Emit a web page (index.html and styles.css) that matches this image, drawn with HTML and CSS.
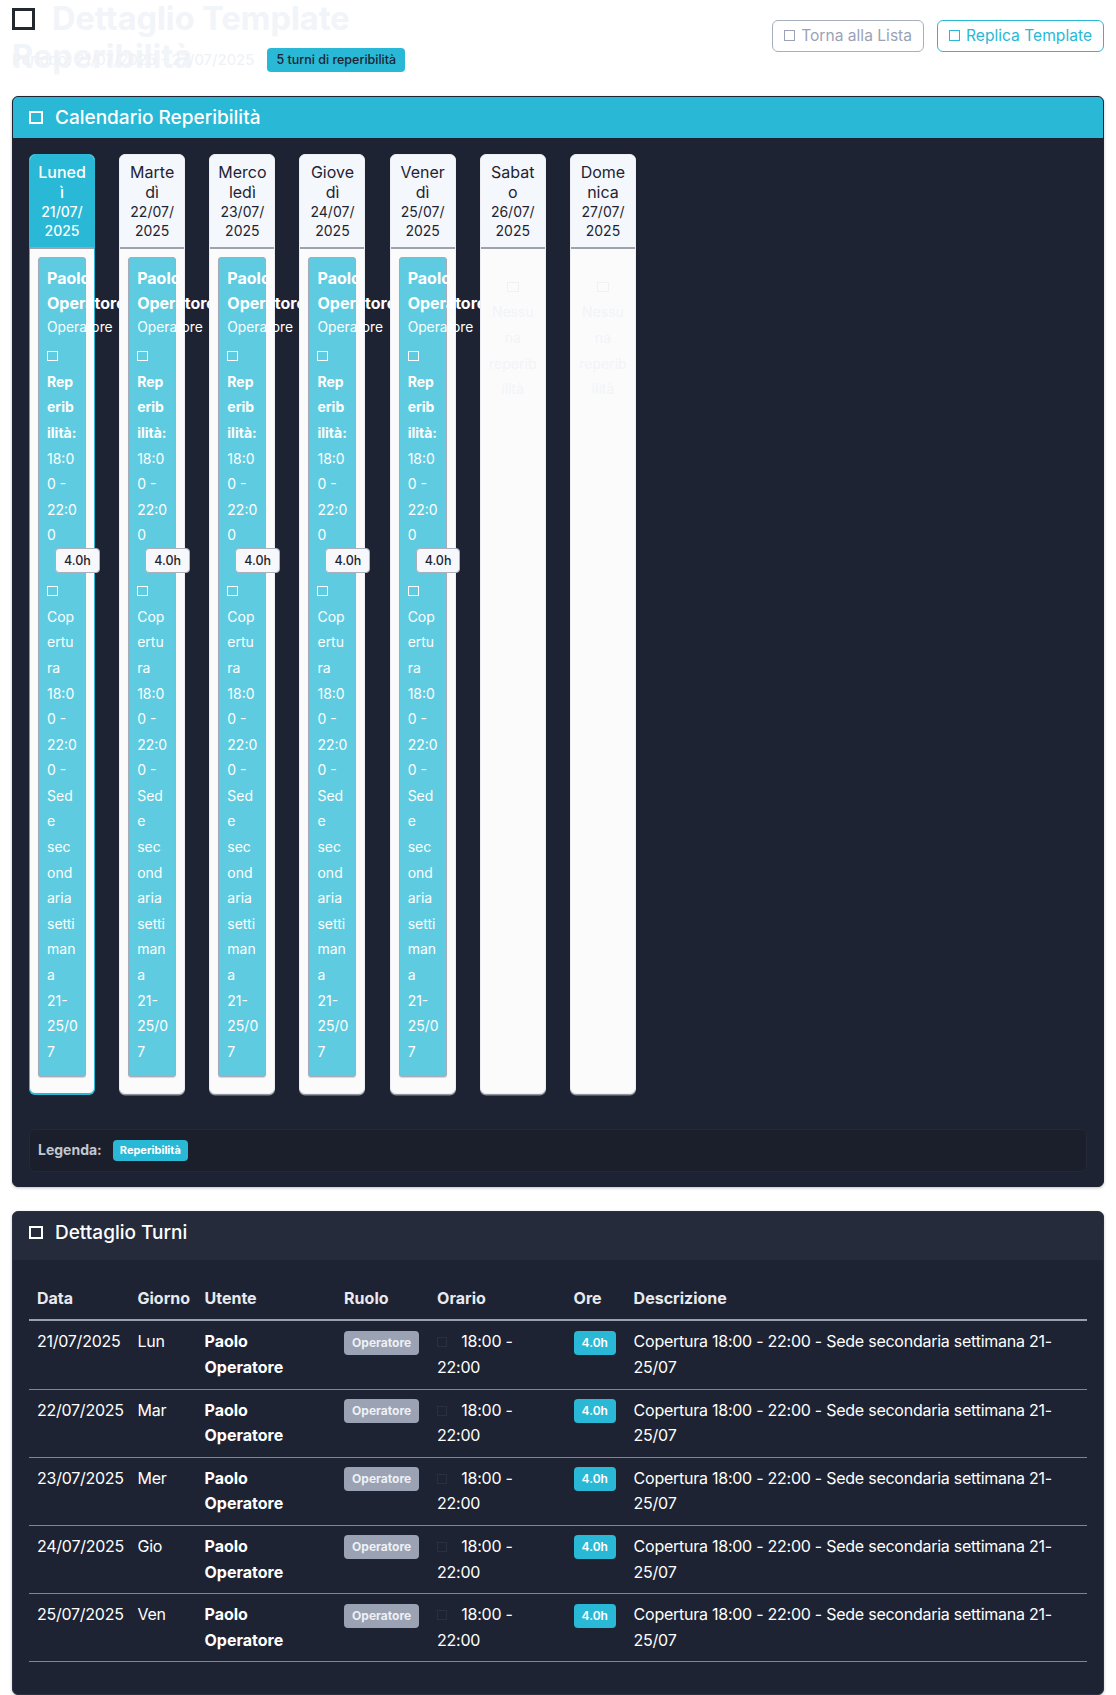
FILE: index.html
```html
<!DOCTYPE html>
<html lang="it">
<head>
<meta charset="utf-8">
<title>Dettaglio Template Reperibilità</title>
<link rel="stylesheet" href="styles.css">
</head>
<body>
<div class="page">
  <header class="top">
    <div class="title-block">
      <h1 class="title"><span class="ico ico-title"></span>Dettaglio Template Reperibilità</h1>
      <div class="subtitle-row">
        <span class="period">Periodo: 21/07/2025 - 27/07/2025</span>
        <span class="badge badge-count">5 turni di reperibilità</span>
      </div>
    </div>
    <div class="actions">
      <button class="btn btn-gray"><span class="ico ico-btn"></span>Torna alla Lista</button>
      <button class="btn btn-teal"><span class="ico ico-btn"></span>Replica Template</button>
    </div>
  </header>

  <section class="card card-cal">
    <div class="card-head head-teal"><span class="ico ico-head"></span>Calendario Reperibilità</div>
    <div class="card-body cal-body">
      <div class="week">
        <div class="day today">
          <div class="day-head"><div class="day-name">Luned<wbr>ì</div><div class="day-date">21/07/<wbr>2025</div></div>
          <div class="day-body">
            <div class="shift">
              <div class="shift-name">Paolo Operatore</div>
              <div class="shift-role">Operatore</div>
              <div class="shift-time"><span class="ico ico-sm"></span> <strong>Rep<wbr>erib<wbr>ilità:</strong> 18:0<wbr>0 - 22:0<wbr>0 <span class="badge badge-hours">4.0h</span></div>
              <div class="shift-desc"><span class="ico ico-sm"></span> Cop<wbr>ertu<wbr>ra 18:0<wbr>0 - 22:0<wbr>0 - Sed<wbr>e sec<wbr>ond<wbr>aria setti<wbr>man<wbr>a 21-<wbr>25/0<wbr>7</div>
            </div>
          </div>
        </div>
        <div class="day">
          <div class="day-head"><div class="day-name">Marte<wbr>dì</div><div class="day-date">22/07/<wbr>2025</div></div>
          <div class="day-body">
            <div class="shift">
              <div class="shift-name">Paolo Operatore</div>
              <div class="shift-role">Operatore</div>
              <div class="shift-time"><span class="ico ico-sm"></span> <strong>Rep<wbr>erib<wbr>ilità:</strong> 18:0<wbr>0 - 22:0<wbr>0 <span class="badge badge-hours">4.0h</span></div>
              <div class="shift-desc"><span class="ico ico-sm"></span> Cop<wbr>ertu<wbr>ra 18:0<wbr>0 - 22:0<wbr>0 - Sed<wbr>e sec<wbr>ond<wbr>aria setti<wbr>man<wbr>a 21-<wbr>25/0<wbr>7</div>
            </div>
          </div>
        </div>
        <div class="day">
          <div class="day-head"><div class="day-name">Merco<wbr>ledì</div><div class="day-date">23/07/<wbr>2025</div></div>
          <div class="day-body">
            <div class="shift">
              <div class="shift-name">Paolo Operatore</div>
              <div class="shift-role">Operatore</div>
              <div class="shift-time"><span class="ico ico-sm"></span> <strong>Rep<wbr>erib<wbr>ilità:</strong> 18:0<wbr>0 - 22:0<wbr>0 <span class="badge badge-hours">4.0h</span></div>
              <div class="shift-desc"><span class="ico ico-sm"></span> Cop<wbr>ertu<wbr>ra 18:0<wbr>0 - 22:0<wbr>0 - Sed<wbr>e sec<wbr>ond<wbr>aria setti<wbr>man<wbr>a 21-<wbr>25/0<wbr>7</div>
            </div>
          </div>
        </div>
        <div class="day">
          <div class="day-head"><div class="day-name">Giove<wbr>dì</div><div class="day-date">24/07/<wbr>2025</div></div>
          <div class="day-body">
            <div class="shift">
              <div class="shift-name">Paolo Operatore</div>
              <div class="shift-role">Operatore</div>
              <div class="shift-time"><span class="ico ico-sm"></span> <strong>Rep<wbr>erib<wbr>ilità:</strong> 18:0<wbr>0 - 22:0<wbr>0 <span class="badge badge-hours">4.0h</span></div>
              <div class="shift-desc"><span class="ico ico-sm"></span> Cop<wbr>ertu<wbr>ra 18:0<wbr>0 - 22:0<wbr>0 - Sed<wbr>e sec<wbr>ond<wbr>aria setti<wbr>man<wbr>a 21-<wbr>25/0<wbr>7</div>
            </div>
          </div>
        </div>
        <div class="day">
          <div class="day-head"><div class="day-name">Vener<wbr>dì</div><div class="day-date">25/07/<wbr>2025</div></div>
          <div class="day-body">
            <div class="shift">
              <div class="shift-name">Paolo Operatore</div>
              <div class="shift-role">Operatore</div>
              <div class="shift-time"><span class="ico ico-sm"></span> <strong>Rep<wbr>erib<wbr>ilità:</strong> 18:0<wbr>0 - 22:0<wbr>0 <span class="badge badge-hours">4.0h</span></div>
              <div class="shift-desc"><span class="ico ico-sm"></span> Cop<wbr>ertu<wbr>ra 18:0<wbr>0 - 22:0<wbr>0 - Sed<wbr>e sec<wbr>ond<wbr>aria setti<wbr>man<wbr>a 21-<wbr>25/0<wbr>7</div>
            </div>
          </div>
        </div>
        <div class="day">
          <div class="day-head"><div class="day-name">Sabat<wbr>o</div><div class="day-date">26/07/<wbr>2025</div></div>
          <div class="day-body">
            <div class="empty"><span class="ico ico-empty"></span><br>Nessu<wbr>na reperib<wbr>ilità</div>
          </div>
        </div>
        <div class="day">
          <div class="day-head"><div class="day-name">Dome<wbr>nica</div><div class="day-date">27/07/<wbr>2025</div></div>
          <div class="day-body">
            <div class="empty"><span class="ico ico-empty"></span><br>Nessu<wbr>na reperib<wbr>ilità</div>
          </div>
        </div>
      </div>
      <div class="legend">
        <span class="legend-label">Legenda:</span>
        <span class="badge badge-legend">Reperibilità</span>
      </div>
    </div>
  </section>

  <section class="card card-dark">
    <div class="card-head head-dark"><span class="ico ico-head"></span>Dettaglio Turni</div>
    <div class="card-body table-body">
      <table class="shifts">
        <thead>
          <tr>
            <th class="c-data">Data</th>
            <th class="c-day">Giorno</th>
            <th class="c-user">Utente</th>
            <th class="c-role">Ruolo</th>
            <th class="c-time">Orario</th>
            <th class="c-hours">Ore</th>
            <th class="c-desc">Descrizione</th>
          </tr>
        </thead>
        <tbody>
          <tr>
            <td>21/07/2025</td><td>Lun</td><td class="user">Paolo Operatore</td>
            <td><span class="badge badge-role">Operatore</span></td>
            <td><span class="ico ico-dim"></span> 18:00 - 22:00</td>
            <td><span class="badge badge-ore">4.0h</span></td>
            <td>Copertura 18:00 - 22:00 - Sede secondaria settimana 21-<wbr>25/07</td>
          </tr>
          <tr>
            <td>22/07/2025</td><td>Mar</td><td class="user">Paolo Operatore</td>
            <td><span class="badge badge-role">Operatore</span></td>
            <td><span class="ico ico-dim"></span> 18:00 - 22:00</td>
            <td><span class="badge badge-ore">4.0h</span></td>
            <td>Copertura 18:00 - 22:00 - Sede secondaria settimana 21-<wbr>25/07</td>
          </tr>
          <tr>
            <td>23/07/2025</td><td>Mer</td><td class="user">Paolo Operatore</td>
            <td><span class="badge badge-role">Operatore</span></td>
            <td><span class="ico ico-dim"></span> 18:00 - 22:00</td>
            <td><span class="badge badge-ore">4.0h</span></td>
            <td>Copertura 18:00 - 22:00 - Sede secondaria settimana 21-<wbr>25/07</td>
          </tr>
          <tr>
            <td>24/07/2025</td><td>Gio</td><td class="user">Paolo Operatore</td>
            <td><span class="badge badge-role">Operatore</span></td>
            <td><span class="ico ico-dim"></span> 18:00 - 22:00</td>
            <td><span class="badge badge-ore">4.0h</span></td>
            <td>Copertura 18:00 - 22:00 - Sede secondaria settimana 21-<wbr>25/07</td>
          </tr>
          <tr>
            <td>25/07/2025</td><td>Ven</td><td class="user">Paolo Operatore</td>
            <td><span class="badge badge-role">Operatore</span></td>
            <td><span class="ico ico-dim"></span> 18:00 - 22:00</td>
            <td><span class="badge badge-ore">4.0h</span></td>
            <td>Copertura 18:00 - 22:00 - Sede secondaria settimana 21-<wbr>25/07</td>
          </tr>
        </tbody>
      </table>
    </div>
  </section>
</div>
</body>
</html>
```

FILE: styles.css
```css
* { box-sizing: border-box; }

body {
  margin: 0;
  background: #ffffff;
  font-family: Inter, "Noto Sans", "Liberation Sans", sans-serif;
  color: #ffffff;
}

.page { padding: 0 12px; }

/* ---------- header ---------- */
.top {
  display: flex;
  align-items: center;
  justify-content: space-between;
  margin-bottom: 24px;
}

.title-block { width: 420px; }

.title {
  margin: 0;
  font-size: 32.5px;
  line-height: 38.4px;
  font-weight: 700;
  color: #f1f4f8;
}

.ico { display: inline-block; vertical-align: baseline; }

.ico-title {
  width: 23px;
  height: 22px;
  border: 3px solid #23272e;
  margin-right: 17px;
}

.subtitle-row {
  display: flex;
  align-items: center;
  gap: 13px;
  height: 24px;
  margin-top: -29px;
}

.period {
  font-size: 15px;
  color: #eef1f5;
}

.badge {
  display: inline-block;
  border-radius: 4px;
  white-space: nowrap;
  text-align: center;
}

.badge-count {
  background: #29b8d6;
  color: #1d2331;
  font-size: 12.5px;
  font-weight: 500;
  height: 24px;
  line-height: 24px;
  padding: 0 9px;
}

.actions { display: flex; gap: 13px; }

.btn {
  display: inline-flex;
  align-items: center;
  gap: 6px;
  height: 32px;
  padding: 0 11px;
  font-family: inherit;
  font-size: 15.6px;
  line-height: 24px;
  border-radius: 6px;
  background: transparent;
  border: 1px solid;
}

.btn-gray { color: #9aa3b5; border-color: #a7afbe; }
.btn-teal { color: #29b8d6; border-color: #29b8d6; }

.ico-btn {
  width: 11px;
  height: 11px;
  border: 1.5px solid currentColor;
}

/* ---------- cards ---------- */
.card {
  background: #1e2333;
  border: 1px solid #1e2333;
  border-radius: 6px;
  overflow: hidden;
  box-shadow: 0 1px 3px rgba(0, 0, 0, 0.25);
}

.card-dark {
  margin-top: 24px;
  border-color: #2b3142;
}

.card-head {
  display: flex;
  align-items: center;
  font-size: 19px;
  font-weight: 500;
  color: #ffffff;
  padding: 8px 16px;
  line-height: 25px;
}

.head-teal { background: #29b8d6; }

.head-dark {
  background: #252b3b;
  padding: 8px 16px 15px;
}

.ico-head {
  width: 14px;
  height: 13px;
  border: 2px solid #ffffff;
  margin-right: 12px;
}

.card-body { padding: 16px; }
.cal-body { padding-bottom: 14px; }
.table-body { padding-top: 18px; }

/* ---------- week calendar ---------- */
.week {
  display: grid;
  grid-template-columns: repeat(7, 66px);
  column-gap: 24.17px;
}

.day {
  display: flex;
  flex-direction: column;
  background: #fbfbfc;
  border: 1px solid #eceef2;
  border-radius: 6px;
  box-shadow: 0 1.5px 0 #8d929c;
  color: #1f2433;
}

.day-head {
  background: #f4f7fb;
  text-align: center;
  padding: 7px 8px 7px;
  border-bottom: 2px solid #9da2ac;
  border-radius: 5px 5px 0 0;
}

.day-name {
  font-size: 16px;
  line-height: 20px;
}

.day-date {
  font-size: 14px;
  line-height: 19px;
}

.today { border-color: #29b8d6; box-shadow: 0 1px 0 #29b8d6; }
.today .day-head { background: #29b8d6; color: #ffffff; font-weight: 500; }

.day-body {
  flex: 1;
  padding: 8px 8px 16px;
}

.shift {
  background: #5ecbe0;
  border: 1px solid #a5abb8;
  border-radius: 3px;
  padding: 8px 8px 12px;
  color: #ffffff;
  box-shadow: 0 1px 1px rgba(0, 0, 0, 0.15);
}

.shift-name {
  font-size: 16px;
  font-weight: 700;
  line-height: 25.6px;
}

.shift-role {
  font-size: 13.8px;
  line-height: 21.8px;
}

.shift-time,
.shift-desc {
  font-size: 14px;
  line-height: 25.6px;
  margin-top: 4.5px;
}

.ico-sm {
  width: 11px;
  height: 10px;
  border: 1.5px solid #ffffff;
}

.badge-hours {
  vertical-align: top;
  margin-left: 8px;
  height: 25px;
  line-height: 23px;
  padding: 0 8px;
  background: #f6f8fb;
  border: 1px solid #a9afbb;
  color: #1f2433;
  font-size: 12.5px;
  font-weight: 500;
}

.empty {
  padding-top: 17px;
  text-align: center;
  font-size: 14px;
  line-height: 25.6px;
  color: #f2f4f7;
}

.ico-empty {
  width: 12px;
  height: 10px;
  border: 1.5px solid #eef1f5;
}

.legend {
  margin-top: 35px;
  display: flex;
  align-items: center;
  gap: 11px;
  padding: 9px 8px;
  line-height: 22.4px;
  background: #1b1f2c;
  border: 1px solid #232938;
  border-radius: 6px;
}

.legend-label {
  font-size: 14px;
  font-weight: 700;
  color: #c3c7d0;
}

.badge-legend {
  background: #29b8d6;
  color: #ffffff;
  font-size: 11px;
  font-weight: 700;
  height: 21px;
  line-height: 21px;
  padding: 0 7px;
}

/* ---------- table ---------- */
.shifts {
  width: 100%;
  table-layout: fixed;
  border-collapse: collapse;
  margin-bottom: 16px;
  font-size: 16px;
  line-height: 25.6px;
  color: #ffffff;
}

.shifts th,
.shifts td {
  padding: 8px;
  text-align: left;
  vertical-align: top;
}

.shifts th {
  font-weight: 700;
  color: #e8eaef;
  border-bottom: 2px solid #9aa1b1;
}

.shifts td {
  border-bottom: 1px solid #7d8596;
  letter-spacing: -0.25px;
}

.shifts td.user { letter-spacing: 0; }

.c-data { width: 100.5px; }
.c-day { width: 67px; }
.c-user { width: 139.6px; }
.c-role { width: 93px; }
.c-time { width: 136.5px; }
.c-hours { width: 60px; }

.user { font-weight: 700; }

.badge-role,
.badge-ore {
  vertical-align: top;
  margin-top: 1.5px;
  height: 24px;
  line-height: 24px;
  padding: 0 8px;
  font-size: 12px;
  font-weight: 700;
  letter-spacing: 0;
}

.badge-role { background: #9aa2b3; color: #eef0f4; }
.badge-ore { background: #29b8d6; color: #ffffff; font-weight: 600; }

.ico-dim {
  width: 10px;
  height: 10px;
  border: 1.5px solid #2a3041;
  margin-right: 10px;
}
```
